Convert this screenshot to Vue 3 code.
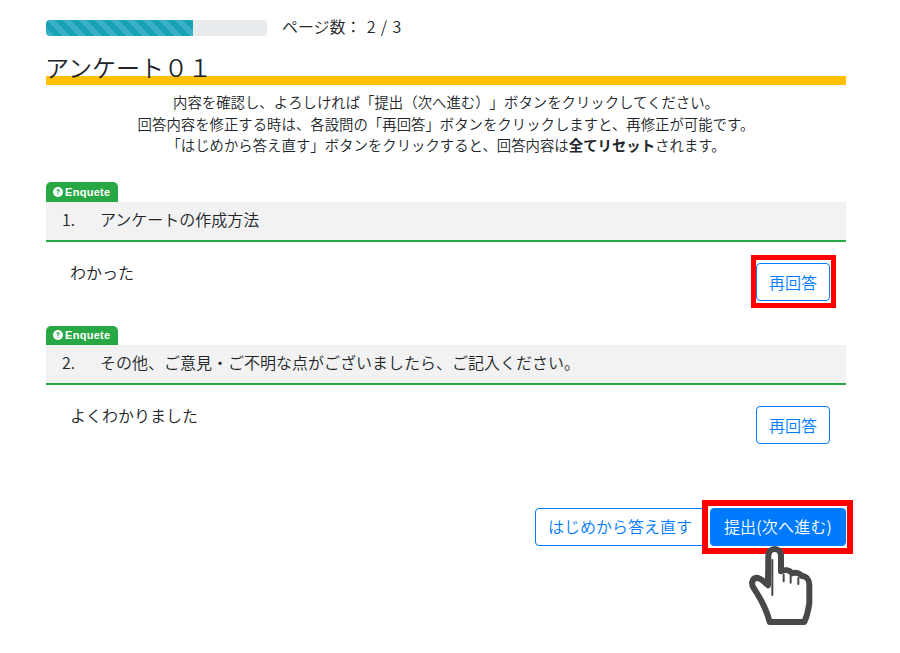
<script setup>
const questions = [
  { no: '1.', title: 'アンケートの作成方法', answer: 'わかった', mark: true },
  { no: '2.', title: 'その他、ご意見・ご不明な点がございましたら、ご記入ください。', answer: 'よくわかりました', mark: false },
]
</script>

<template>
  <div class="page">
    <div class="progress-row">
      <div class="progress"><div class="bar"></div></div>
      <span class="count">ページ数： 2 / 3</span>
    </div>
    <h1 class="title">アンケート０１</h1>
    <div class="intro">
      <p>内容を確認し、よろしければ「提出（次へ進む）」ボタンをクリックしてください。</p>
      <p>回答内容を修正する時は、各設問の「再回答」ボタンをクリックしますと、再修正が可能です。</p>
      <p>「はじめから答え直す」ボタンをクリックすると、回答内容は<b>全てリセット</b>されます。</p>
    </div>
    <section v-for="q in questions" :key="q.no" class="question">
      <div class="badge">
        <svg class="qicon" viewBox="0 0 16 16"><circle cx="8" cy="8" r="8" fill="#fff"/><path d="M5.4 6.2C5.5 4.6 6.6 3.7 8.1 3.7c1.500 0 2.600.9 2.600 2.200 0 1-.6 1.500-1.300 2-.6.4-.8.700-.8 1.300v.3H7V8.900c0-.9.400-1.400 1-1.900.6-.4.900-.7.900-1.100 0-.5-.4-.8-.9-.8-.6 0-1 .4-1 1.100z" fill="#28a745"/><rect x="7" y="10.600" width="1.700" height="1.700" fill="#28a745"/></svg>
        Enquete
      </div>
      <div class="q-head"><span class="no">{{ q.no }}</span>{{ q.title }}</div>
      <div class="q-body">
        <div class="answer">{{ q.answer }}</div>
        <div class="btn-wrap">
          <button class="btn outline redo">再回答</button>
          <span v-if="q.mark" class="mark mark-a"></span>
        </div>
      </div>
    </section>
    <div class="actions">
      <button class="btn outline">はじめから答え直す</button>
      <div class="btn-wrap">
        <button class="btn primary">提出(次へ進む)</button>
        <span class="mark mark-b"></span>
        <svg class="hand" viewBox="0 0 225 270">
          <path d="M74 246 C66 215 50 180 27 146 C14 126 26 108 44 116 C52 120 60 128 69 136 L70 48 C70 20 108 20 108 48 L108 94 C120 88 134 90 142 100 C152 96 166 100 170 108 C184 108 193 120 193 134 L193 190 C190 212 186 228 178 246 Z" fill="#fff" stroke="#484848" stroke-width="18" stroke-linejoin="round"/>
          <path d="M82 60 L82 165 M116 104 L116 124 M137 108 L137 128 M160 114 L160 132" fill="none" stroke="#484848" stroke-width="6" stroke-linecap="round"/>
        </svg>
      </div>
    </div>
  </div>
</template>

<style>
html, body { margin: 0; background: #fff; }
</style>

<style scoped>
.page {
  width: 800px;
  height: 653px;
  box-sizing: border-box;
  margin-left: 46px;
  padding-top: 16px;
  font-family: "Noto Sans CJK JP", "Noto Sans", sans-serif;
  font-size: 16px;
  font-weight: 350;
  color: #212529;
  text-spacing-trim: space-all;
}
.progress-row { display: flex; align-items: center; height: 24px; gap: 15px; }
.progress { width: 221px; height: 16px; background: #e9ecef; border-radius: 4px; overflow: hidden; }
.bar {
  width: 147px; height: 100%;
  background-color: #17a2b8;
  background-image: linear-gradient(45deg, rgba(255,255,255,.15) 25%, transparent 25%, transparent 50%, rgba(255,255,255,.15) 50%, rgba(255,255,255,.15) 75%, transparent 75%, transparent);
  background-size: 16px 16px;
}
.count { font-size: 16px; line-height: 24px; padding-bottom: 4px; word-spacing: 2px; letter-spacing: -.1px; }
.title {
  margin: 11px 0 0;
  height: 25px;
  font-size: 24px;
  font-weight: 350;
  line-height: 32px;
  text-indent: -1px;
  border-bottom: 9px solid #ffc107;
  box-sizing: content-box;
}
.intro { margin-top: 6px; text-align: center; font-size: 14.400px; line-height: 21.500px; }
.intro p { margin: 0; }
.intro b { font-weight: 700; }
.intro + .question { margin-top: 26px; }
.badge {
  display: flex; align-items: center; gap: 2px;
  width: 72px; height: 20px; box-sizing: border-box;
  padding-left: 7px;
  background: #28a745; color: #fff;
  border-radius: 5px 5px 0 0;
  font-family: "Liberation Sans", sans-serif;
  font-size: 11px; font-weight: 700; letter-spacing: .3px;
}
.question + .question .badge { height: 19px; }
.qicon { width: 10px; height: 10px; }
.q-head {
  height: 40px;
  box-sizing: border-box;
  padding-left: 16px;
  line-height: 34px;
  background: #f2f2f2;
  border-bottom: 2px solid #28a745;
}
.no { display: inline-block; width: 38px; }
.q-body { display: flex; justify-content: space-between; align-items: flex-start; height: 84px; padding: 21px 16px 0 24px; box-sizing: border-box; }
.answer { line-height: 19px; }
.btn-wrap { position: relative; }
.btn {
  display: block;
  height: 38px; box-sizing: border-box;
  padding: 0 12px;
  font: inherit; line-height: 34px;
  border-radius: 4px; border: 1px solid #007bff;
  background: #fff; color: #007bff;
}
.redo { width: 74px; padding: 0; }
.primary { background: #007bff; color: #fff; width: 136px; padding: 0; letter-spacing: .2px; }
.mark { position: absolute; border: 5px solid #f00; pointer-events: none; box-sizing: border-box; }
.mark-a { left: -5px; top: -8px; width: 85px; height: 53px; }
.mark-b { left: -8px; top: -8px; width: 151px; height: 54px; border-width: 6px; }
.actions { display: flex; justify-content: flex-end; gap: 5px; margin-top: 39px; }
.actions .btn { padding-bottom: 3px; }
.actions .outline { width: 170px; padding-left: 0; padding-right: 0; }
.hand { position: absolute; left: 35px; top: 32px; width: 75px; height: 90px; }
</style>
